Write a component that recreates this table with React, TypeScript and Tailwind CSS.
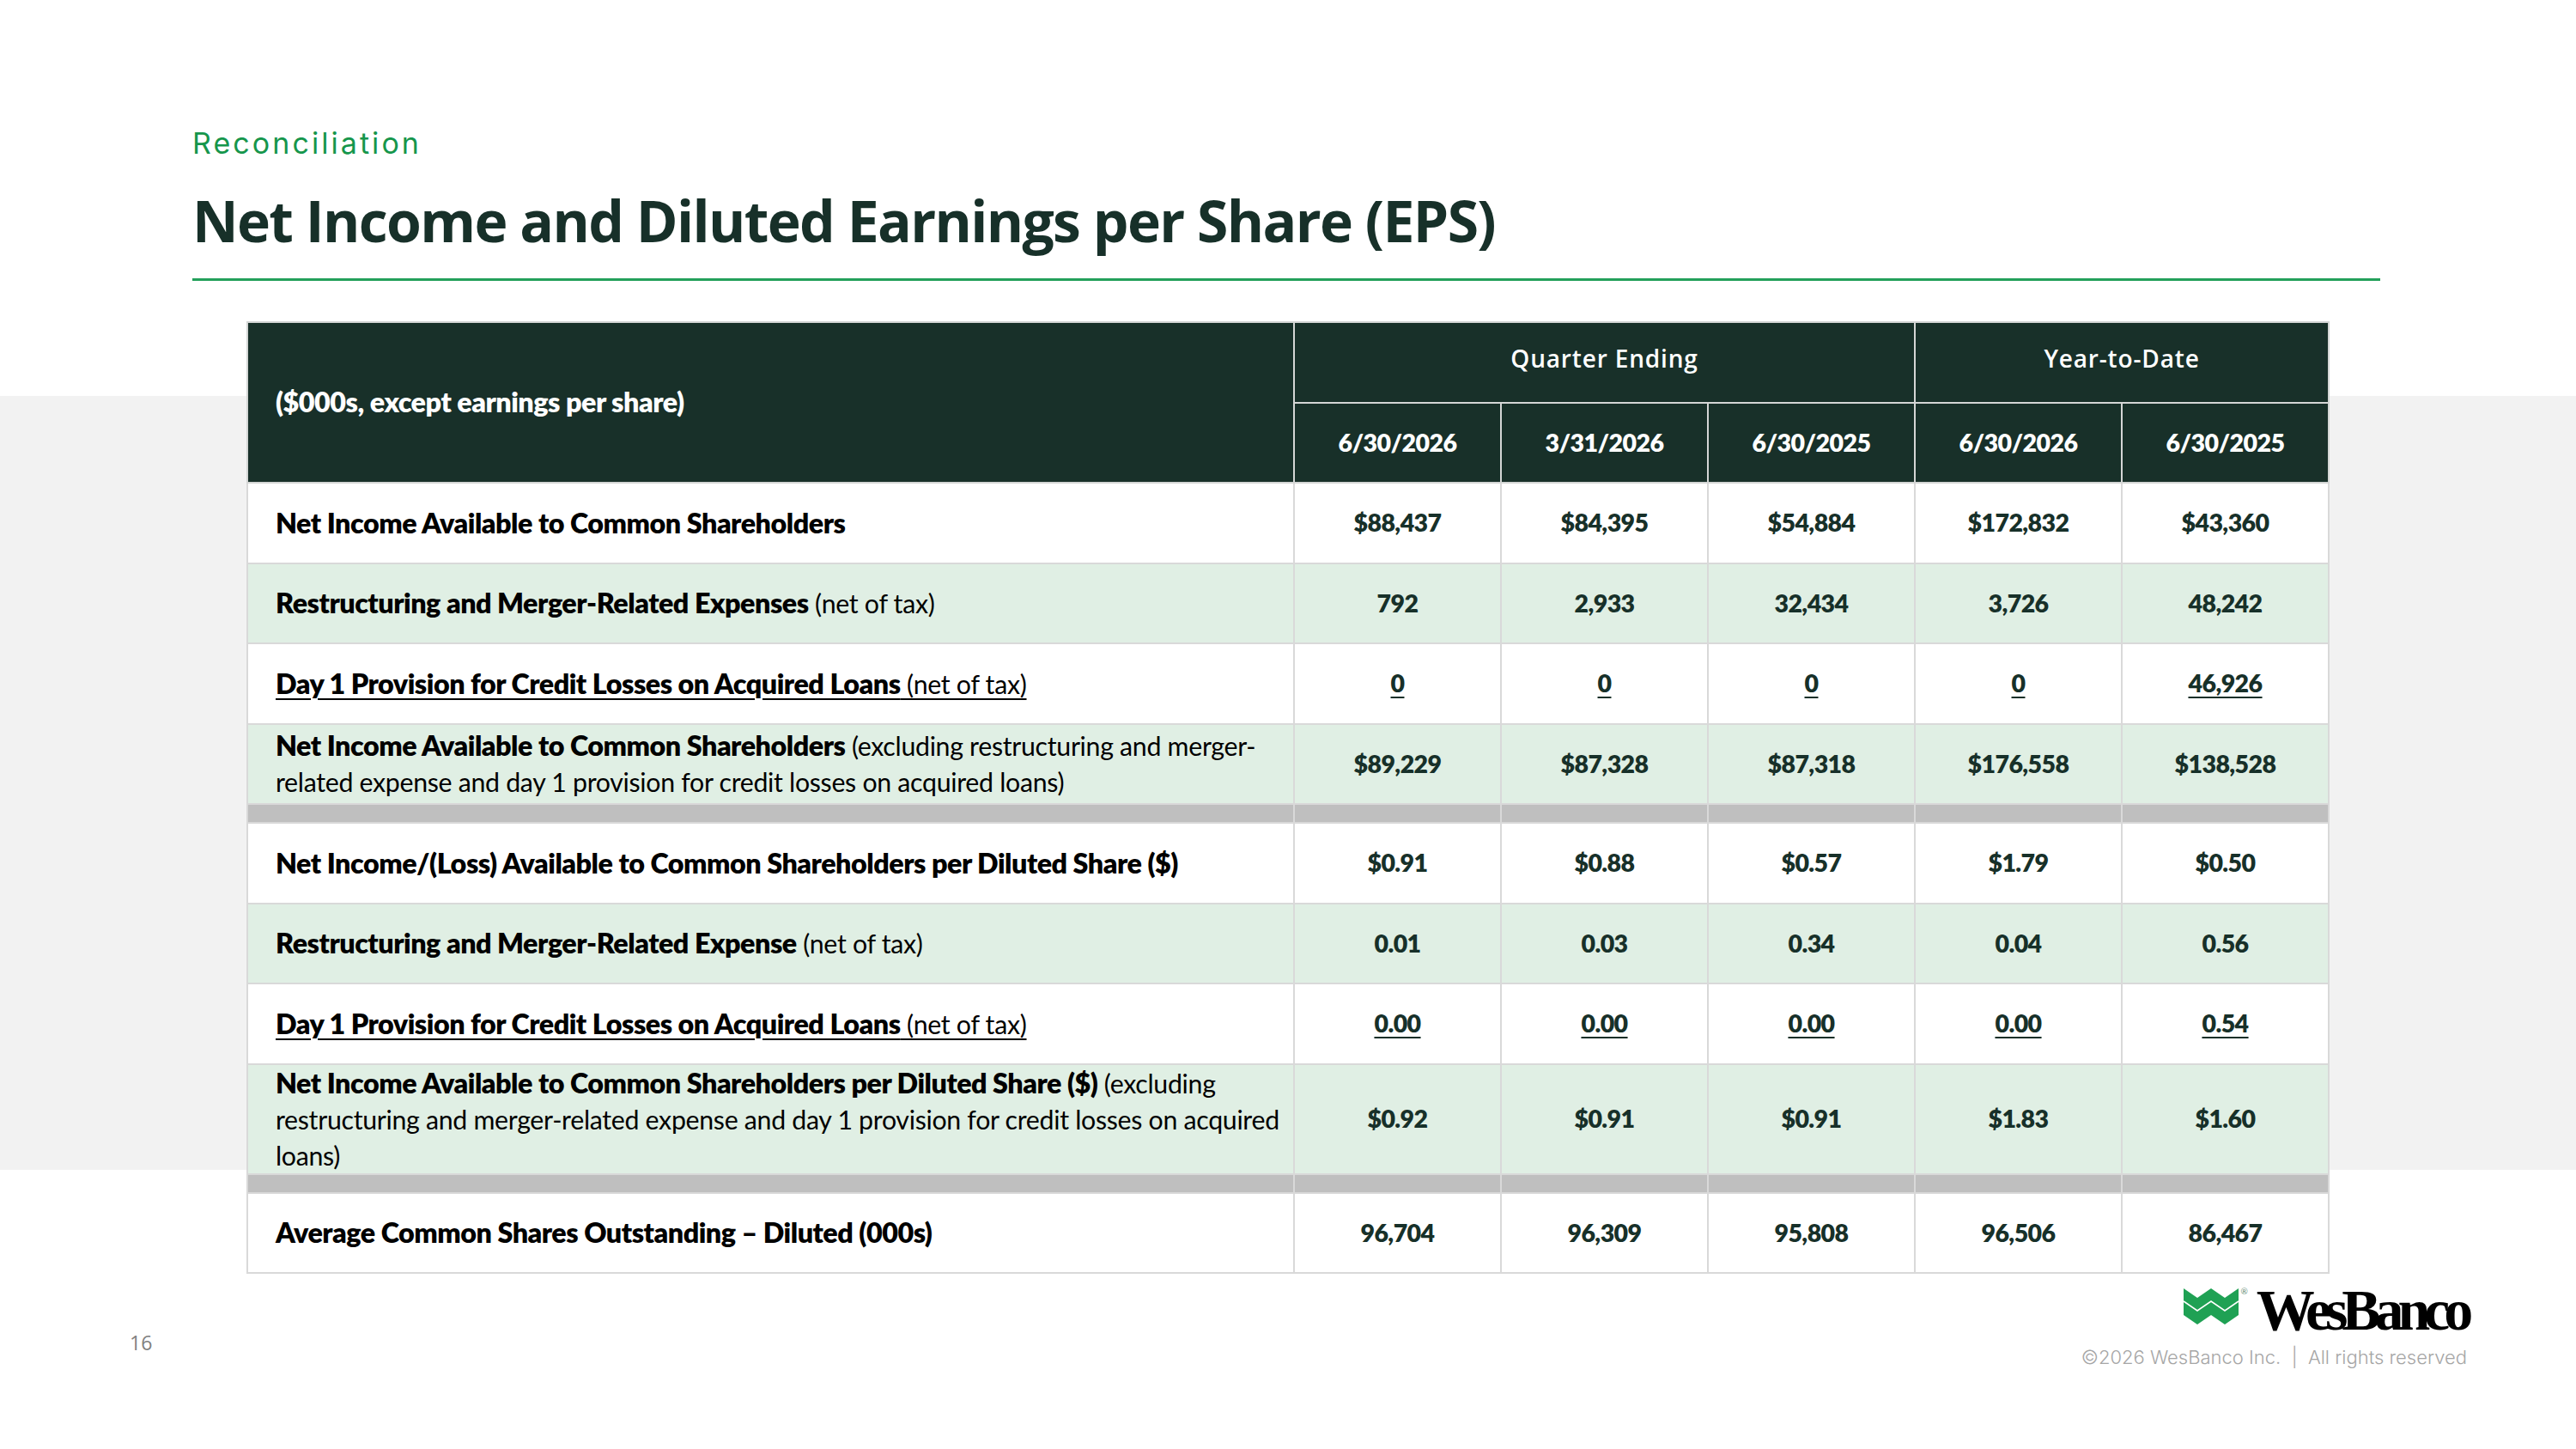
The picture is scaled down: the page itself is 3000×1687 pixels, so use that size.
import React from 'react'

type DataRow = {
  label: React.ReactNode
  values: string[]
  shaded?: boolean
  underline?: boolean
  tall?: boolean
}

type Row = DataRow | 'spacer'

const B = ({ children }: { children: React.ReactNode }) => (
  <span className="font-extrabold text-[32.3px] tracking-[-0.015em]">{children}</span>
)

const rows: Row[] = [
  {
    label: <B>Net Income Available to Common Shareholders</B>,
    values: ['$88,437', '$84,395', '$54,884', '$172,832', '$43,360'],
  },
  {
    label: (
      <>
        <B>Restructuring and Merger-Related Expenses</B> (net of tax)
      </>
    ),
    values: ['792', '2,933', '32,434', '3,726', '48,242'],
    shaded: true,
  },
  {
    label: (
      <>
        <B>Day 1 Provision for Credit Losses on Acquired Loans</B> (net of tax)
      </>
    ),
    values: ['0', '0', '0', '0', '46,926'],
    underline: true,
  },
  {
    label: (
      <>
        <B>Net Income Available to Common Shareholders</B> (excluding restructuring and merger-
        <br />
        related expense and day 1 provision for credit losses on acquired loans)
      </>
    ),
    values: ['$89,229', '$87,328', '$87,318', '$176,558', '$138,528'],
    shaded: true,
  },
  'spacer',
  {
    label: <B>Net Income/(Loss) Available to Common Shareholders per Diluted Share ($)</B>,
    values: ['$0.91', '$0.88', '$0.57', '$1.79', '$0.50'],
  },
  {
    label: (
      <>
        <B>Restructuring and Merger-Related Expense</B> (net of tax)
      </>
    ),
    values: ['0.01', '0.03', '0.34', '0.04', '0.56'],
    shaded: true,
  },
  {
    label: (
      <>
        <B>Day 1 Provision for Credit Losses on Acquired Loans</B> (net of tax)
      </>
    ),
    values: ['0.00', '0.00', '0.00', '0.00', '0.54'],
    underline: true,
  },
  {
    label: (
      <>
        <B>Net Income Available to Common Shareholders per Diluted Share ($)</B> (excluding
        <br />
        restructuring and merger-related expense and day 1 provision for credit losses on acquired
        <br />
        loans)
      </>
    ),
    values: ['$0.92', '$0.91', '$0.91', '$1.83', '$1.60'],
    shaded: true,
    tall: true,
  },
  'spacer',
  {
    label: <B>Average Common Shares Outstanding – Diluted (000s)</B>,
    values: ['96,704', '96,309', '95,808', '96,506', '86,467'],
  },
]

const dates = ['6/30/2026', '3/31/2026', '6/30/2025', '6/30/2026', '6/30/2025']

function WesBancoMark() {
  return (
    <svg width="64" height="43" viewBox="0 0 64 43">
      <path d="M0 0 L16 11 L32 0 L48 11 L64 0 L64 31 L48 42 L32 31 L16 42 L0 31 Z" fill="#1fa154" />
      <path d="M0 15 L16 26 L32 15 L48 26 L64 15" fill="none" stroke="#ffffff" strokeWidth="1.6" />
    </svg>
  )
}

export default function App() {
  return (
    <div className="w-[3000px] h-[1687px] flex flex-col bg-[linear-gradient(to_bottom,#ffffff_461px,#f2f2f2_461px,#f2f2f2_1362px,#ffffff_1362px)] font-['Lato',sans-serif]">
      {/* heading */}
      <div className="flex flex-col pt-[150px] pl-[224px] pr-[228px]">
        <p className="font-['Inter',sans-serif] text-[34px] leading-none tracking-[0.09em] text-[#16964c]">
          Reconciliation
        </p>
        <h1 className="mt-[37px] font-['Open_Sans',sans-serif] font-bold text-[66px] leading-[70px] tracking-[-0.025em] text-[#173029]">
          Net Income and Diluted Earnings per Share (EPS)
        </h1>
        <div className="mt-[33px] h-[3px] bg-[#23a05a]" />
      </div>

      {/* table */}
      <div className="pl-[287px] mt-[47px]">
        <table className="w-[2424px] table-fixed border-collapse">
          <colgroup>
            <col className="w-[1219px]" />
            <col className="w-[241px]" />
            <col className="w-[241px]" />
            <col className="w-[241px]" />
            <col className="w-[241px]" />
            <col className="w-[241px]" />
          </colgroup>
          <thead className="bg-[#183029] text-white">
            <tr className="h-[93.5px]">
              <th
                rowSpan={2}
                className="border-2 border-[#d4d6d5] pl-[32px] text-left font-extrabold text-[32.3px] tracking-[-0.015em]"
              >
                ($000s, except earnings per share)
              </th>
              <th
                colSpan={3}
                className="border-2 border-[#d4d6d5] pb-[10px] font-['Open_Sans',sans-serif] font-semibold text-[28px] tracking-[0.03em]"
              >
                Quarter Ending
              </th>
              <th
                colSpan={2}
                className="border-2 border-[#d4d6d5] pb-[10px] font-['Open_Sans',sans-serif] font-semibold text-[28px] tracking-[0.03em]"
              >
                Year-to-Date
              </th>
            </tr>
            <tr className="h-[93.5px]">
              {dates.map((d, i) => (
                <th key={i} className="border-2 border-[#d4d6d5] font-extrabold text-[28.5px] tracking-[-0.02em]">
                  {d}
                </th>
              ))}
            </tr>
          </thead>
          <tbody>
            {rows.map((row, i) => {
              if (row === 'spacer') {
                return (
                  <tr key={i} className="h-[22px] bg-[#bfbfbf]">
                    {[0, 1, 2, 3, 4, 5].map((c) => (
                      <td key={c} className="border-2 border-[#d9d9d9] p-0" />
                    ))}
                  </tr>
                )
              }
              return (
                <tr
                  key={i}
                  className={`${row.tall ? 'h-[121px]' : 'h-[93.5px]'} ${row.shaded ? 'bg-[#e0efe4]' : 'bg-white'}`}
                >
                  <td className="border-2 border-[#d9d9d9] pl-[32px] pr-[8px] py-0 text-left text-[30.3px] text-black leading-[42px] tracking-[-0.01em]">
                    <span className={row.underline ? 'underline decoration-2 underline-offset-[5px]' : ''}>
                      {row.label}
                    </span>
                  </td>
                  {row.values.map((v, j) => (
                    <td
                      key={j}
                      className="border-2 border-[#d9d9d9] text-center font-extrabold text-[28.5px] text-[#173029] tracking-[-0.02em]"
                    >
                      <span className={row.underline ? 'underline decoration-2 underline-offset-[5px]' : ''}>
                        {v}
                      </span>
                    </td>
                  ))}
                </tr>
              )
            })}
          </tbody>
        </table>
      </div>

      {/* footer */}
      <div className="mt-auto mb-[96px] flex items-start justify-between pl-[151px] pr-[127px]">
        <span className="mt-[61px] font-['Open_Sans',sans-serif] text-[23px] leading-none text-[#808080]">16</span>
        <div className="flex flex-col items-end">
          <div className="flex items-start">
            <div className="mt-[9px] flex items-start">
              <WesBancoMark />
              <span className="ml-[3px] -mt-[2px] text-[10px] leading-none text-[#6a8f78]">®</span>
            </div>
            <span className="ml-[10px] font-['Liberation_Serif',serif] font-bold text-[68px] leading-none tracking-[-0.105em] text-black">
              WesBanco
            </span>
          </div>
          <p className="mt-[10px] font-['Inter',sans-serif] font-light text-[22px] leading-none text-[#a6a6a6]">
            ©2026 WesBanco Inc.&nbsp; |&nbsp; All rights reserved
          </p>
        </div>
      </div>
    </div>
  )
}
